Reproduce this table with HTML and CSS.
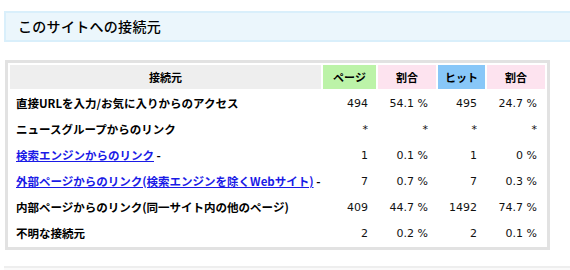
FILE: index.html
```html
<!DOCTYPE html>
<html lang="ja">
<head>
<meta charset="utf-8">
<link rel="stylesheet" href="styles.css">
</head>
<body>
<div class="page">
  <h2 class="title">このサイトへの接続元</h2>
  <div class="box">
    <table class="stats">
      <thead>
        <tr>
          <th class="h-src">接続元</th>
          <th class="h-page">ページ</th>
          <th class="h-rate">割合</th>
          <th class="h-hit">ヒット</th>
          <th class="h-rate">割合</th>
        </tr>
      </thead>
      <tbody>
        <tr>
          <td class="src">直接URLを入力/お気に入りからのアクセス</td>
          <td class="num">494</td><td class="num">54.1 %</td><td class="num">495</td><td class="num">24.7 %</td>
        </tr>
        <tr>
          <td class="src">ニュースグループからのリンク</td>
          <td class="num">*</td><td class="num">*</td><td class="num">*</td><td class="num">*</td>
        </tr>
        <tr>
          <td class="src"><a href="#">検索エンジンからのリンク</a> -</td>
          <td class="num">1</td><td class="num">0.1 %</td><td class="num">1</td><td class="num">0 %</td>
        </tr>
        <tr>
          <td class="src"><a href="#">外部ページからのリンク(検索エンジンを除くWebサイト)</a> -</td>
          <td class="num">7</td><td class="num">0.7 %</td><td class="num">7</td><td class="num">0.3 %</td>
        </tr>
        <tr>
          <td class="src">内部ページからのリンク(同一サイト内の他のページ)</td>
          <td class="num">409</td><td class="num">44.7 %</td><td class="num">1492</td><td class="num">74.7 %</td>
        </tr>
        <tr>
          <td class="src">不明な接続元</td>
          <td class="num">2</td><td class="num">0.2 %</td><td class="num">2</td><td class="num">0.1 %</td>
        </tr>
      </tbody>
    </table>
  </div>
  <div class="next"></div>
</div>
</body>
</html>
```

FILE: styles.css
```css
html, body {
  margin: 0;
  padding: 0;
  background: #ffffff;
  overflow: hidden;
}
body {
  width: 570px;
  height: 270px;
  font-family: "Noto Sans CJK JP", sans-serif;
  color: #000;
}
.page {
  padding: 11px 0 0 4px;
}
.title {
  margin: 0 -2px 0 0;
  height: 27px;
  box-sizing: content-box;
  border: 2px solid #d9effb;
  background: #ebf6fc;
  padding: 0 0 0 12px;
  font-size: 14px;
  font-weight: 500;
  line-height: 27px;
  letter-spacing: 0.3px;
}
.box {
  margin: 18px 0 0 1px;
  width: 539px;
  border: 3px solid #e2e2e2;
  background: #fff;
}
.stats {
  width: 100%;
  border-collapse: separate;
  border-spacing: 2px;
  font-size: 11.5px;
}
.stats th {
  height: 24px;
  padding: 0;
  font-weight: 700;
  font-size: 11px;
  text-align: center;
}
.h-src { background: #eeeeee; }
.h-page { background: #bcf3a8; width: 53px; }
.h-rate { background: #fde3ef; width: 58px; }
.h-hit { background: #88c7f8; width: 47px; }
.stats td {
  height: 24px;
  padding: 0;
}
.src {
  padding-left: 6px !important;
  font-weight: 700;
  font-size: 11.5px;
  white-space: nowrap;
}
.src a {
  color: #1a1ae6;
  text-decoration: underline;
}
.num {
  text-align: right;
  padding-right: 8px !important;
  font-family: "DejaVu Sans", Verdana, sans-serif;
  font-size: 11px;
  color: #111;
}
.next {
  margin: 16px -2px 0 0;
  height: 2px;
  border-top: 2px solid #eeeeee;
  background: #fafafa;
}
```
